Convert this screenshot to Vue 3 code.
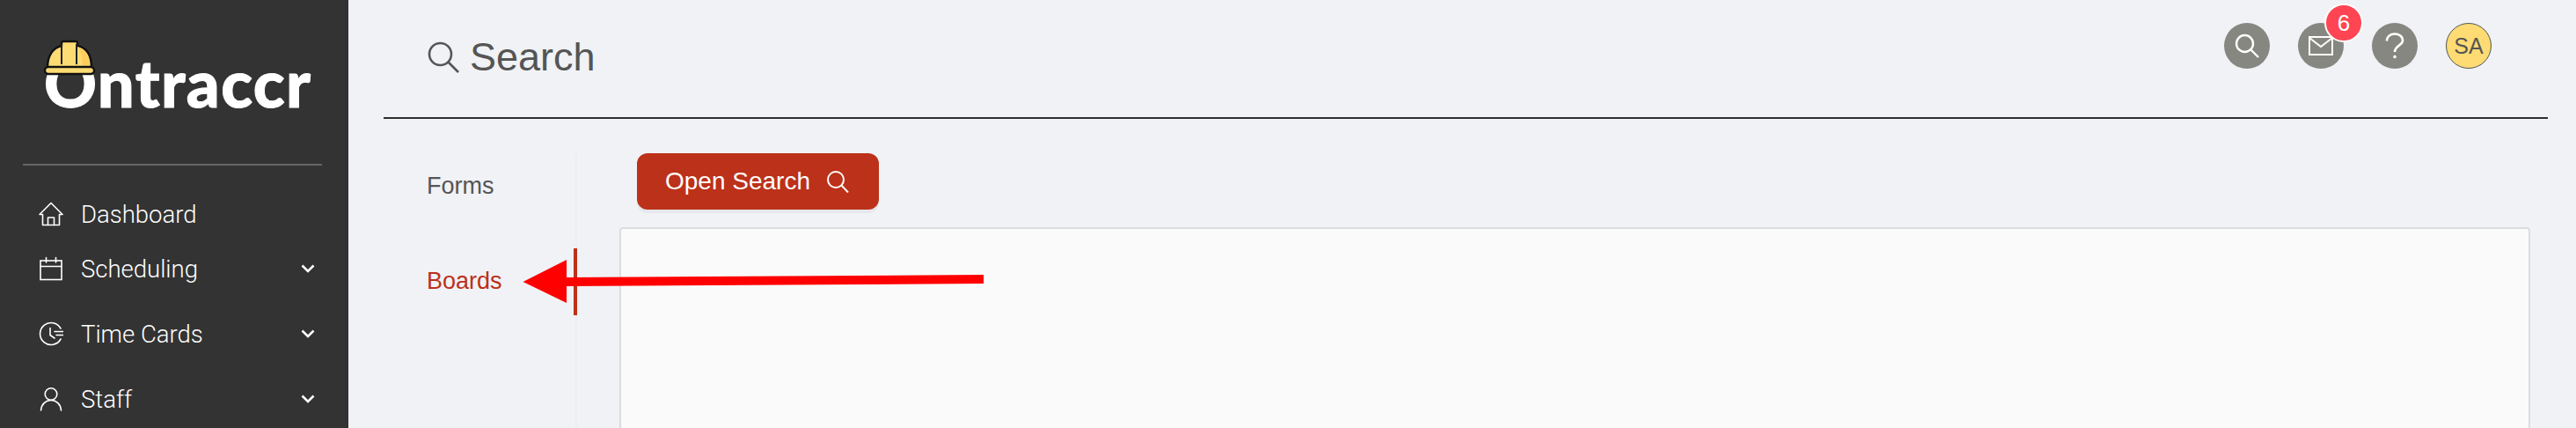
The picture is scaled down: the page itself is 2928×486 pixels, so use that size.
<template>
  <div class="page">
    <aside class="sidebar">
      <div class="logo">
        <span class="logo-text">Ontraccr</span>
        <svg class="helmet" width="60" height="42" viewBox="0 0 60 42">
          <path d="M5 32C5 17 12 9 21 7V4Q21 2 23 2H37Q39 2 39 4V7C49 9 55 17 55 32Z" fill="#ffdc73" stroke="#111" stroke-width="2.4" stroke-linejoin="round"/>
          <path d="M39 8C47 10 53 18 53 31H44C45 22 43 13 39 8Z" fill="#ffcf5e"/>
          <path d="M21 5V28M38 5V28" stroke="#222" stroke-width="2" fill="none"/>
          <rect x="2" y="31" width="56" height="8" rx="4" fill="#ffdc73" stroke="#111" stroke-width="2.4"/>
        </svg>
      </div>
      <div class="side-divider"></div>
      <nav class="menu">
        <div v-for="item in menu" :key="item.label" class="menu-item" :class="{ first: !item.sub }">
          <svg class="menu-icon" width="28" height="28" viewBox="0 0 28 28" fill="none" stroke="#fff" stroke-width="1.6" stroke-linejoin="round" stroke-linecap="round">
            <template v-if="item.icon === 'home'">
              <path d="M1 14.5L14 1.5L27 14.5H23.5V26.5H4.5V14.5Z"/>
              <path d="M10.5 26.5V18H17.5V26.5"/>
            </template>
            <template v-else-if="item.icon === 'calendar'">
              <rect x="2" y="5" width="24" height="21.5" stroke-linejoin="miter"/>
              <path d="M2 11.5H26M8.5 1.5V7M19.5 1.5V7"/>
            </template>
            <template v-else-if="item.icon === 'clock'">
              <path d="M25 8A12.5 12.5 0 1 0 25 20"/>
              <path d="M13 7.5V15.5L18 19M18 11.5H27.5M20 15.5H27.5"/>
            </template>
            <template v-else>
              <circle cx="14" cy="8.5" r="6.8"/>
              <path d="M2.5 27C3 20 8 15.5 14 15.5S25 20 25.5 27"/>
            </template>
          </svg>
          <span class="menu-label">{{ item.label }}</span>
          <svg v-if="item.sub" class="chevron" width="16" height="10" viewBox="0 0 16 10" fill="none" stroke="#fff" stroke-width="2.6">
            <path d="M1.5 1.5L8 8L14.5 1.5"/>
          </svg>
        </div>
      </nav>
    </aside>

    <main class="main">
      <header class="header">
        <div class="title">
          <svg width="36" height="36" viewBox="0 0 36 36" fill="none" stroke="#555" stroke-width="2.6">
            <circle cx="14.5" cy="14.5" r="12.5"/>
            <path d="M23.5 23.5L35 35"/>
          </svg>
          <span>Search</span>
        </div>
        <div class="actions">
          <button class="round">
            <svg width="30" height="30" viewBox="0 0 30 30" fill="none" stroke="#fff" stroke-width="2.4">
              <circle cx="12.5" cy="12.5" r="9.5"/>
              <path d="M19.5 19.5L28 28"/>
            </svg>
          </button>
          <button class="round">
            <svg width="28" height="22" viewBox="0 0 28 22" fill="none" stroke="#fff" stroke-width="2">
              <rect x="1" y="1" width="26" height="20"/>
              <path d="M1 2L14 12L27 2"/>
            </svg>
            <span class="badge">6</span>
          </button>
          <button class="round">
            <svg width="22" height="30" viewBox="0 0 22 30" fill="none" stroke="#fff" stroke-width="2.6">
              <path d="M2 9.5C2 4.5 6 1.5 11 1.5S20 4.5 20 9C20 15 11 14.5 11 22"/>
              <circle cx="11" cy="27.5" r="1.4" fill="#fff" stroke-width="1"/>
            </svg>
          </button>
          <div class="avatar">SA</div>
        </div>
      </header>

      <div class="body">
        <div class="tabs">
          <div class="tab">Forms</div>
          <div class="tab active">Boards</div>
        </div>
        <div class="content">
          <button class="open-btn">
            <span>Open Search</span>
            <svg width="26" height="26" viewBox="0 0 26 26" fill="none" stroke="#fff" stroke-width="2">
              <circle cx="11" cy="11" r="9"/>
              <path d="M17.5 17.5L25 25.5"/>
            </svg>
          </button>
          <div class="panel"></div>
        </div>
      </div>
    </main>

    <!-- red annotation drawn on top of the screenshot -->
    <svg class="arrow" width="540" height="60" viewBox="0 0 540 60">
      <path d="M50 5V54L0.5 30Z" fill="#ff0000"/>
      <path d="M50 25L524 22V32L50 35Z" fill="#ff0000"/>
    </svg>
  </div>
</template>

<script setup>
const menu = [
  { label: 'Dashboard', icon: 'home', sub: false },
  { label: 'Scheduling', icon: 'calendar', sub: true },
  { label: 'Time Cards', icon: 'clock', sub: true },
  { label: 'Staff', icon: 'user', sub: true }
]
</script>

<style>
html,
body {
  margin: 0;
  background: #f0f2f6;
}
</style>

<style scoped>
.page {
  position: relative;
  display: flex;
  width: 2928px;
  height: 486px;
  overflow: hidden;
  background: #f0f2f6;
  font-family: "Liberation Sans", Arial, sans-serif;
}

.sidebar {
  flex: 0 0 396px;
  background: #333;
  color: #fff;
  font-family: Roboto, sans-serif;
}

.logo {
  position: relative;
  height: 186px;
  box-sizing: border-box;
  padding: 54px 0 0 50px;
}

.logo-text {
  display: block;
  font-family: Lato, sans-serif;
  font-weight: 900;
  font-size: 74px;
  line-height: 80px;
  letter-spacing: 1.4px;
  color: #fff;
  -webkit-text-stroke: 1px #fff;
}

.helmet {
  position: absolute;
  left: 49px;
  top: 45px;
}

.side-divider {
  height: 2px;
  margin: 0 30px 0 26px;
  background: #666;
}

.menu {
  padding-top: 30px;
}

.menu-item {
  display: flex;
  align-items: center;
  height: 74px;
  padding: 0 38px 0 44px;
}

.menu-item.first {
  height: 50px;
}

.menu-label {
  flex: 1;
  margin-left: 20px;
  font-size: 27.5px;
  font-weight: 300;
}

.menu-icon {
  flex: none;
}

.main {
  flex: 1;
  min-width: 0;
  padding: 0 32px 0 40px;
}

.header {
  display: flex;
  justify-content: space-between;
  height: 133px;
  border-bottom: 2px solid #2e2e2e;
}

.title {
  display: flex;
  align-items: center;
  align-self: flex-start;
  gap: 12px;
  height: 130px;
  padding-left: 50px;
  font-size: 45px;
  color: #555;
}

.actions {
  display: flex;
  gap: 32px;
  padding: 26px 64px 0 0;
}

.round {
  position: relative;
  display: flex;
  align-items: center;
  justify-content: center;
  width: 52px;
  height: 52px;
  padding: 0;
  border: 0;
  border-radius: 50%;
  background: #878781;
}

.badge {
  position: absolute;
  top: -22px;
  right: -22px;
  box-sizing: border-box;
  width: 44px;
  height: 44px;
  border: 2px solid #fff;
  border-radius: 50%;
  background: #ff4554;
  color: #fff;
  font-size: 26px;
  line-height: 40px;
  text-align: center;
}

.avatar {
  box-sizing: border-box;
  width: 52px;
  height: 52px;
  border: 1px solid #555;
  border-radius: 50%;
  background: #ffdc73;
  color: #555;
  font-size: 25px;
  line-height: 50px;
  text-align: center;
}

.body {
  display: flex;
}

.tabs {
  flex: 0 0 220px;
  box-sizing: border-box;
  margin-top: 39px;
  height: 320px;
  border-right: 2px solid #eceef2;
}

.tab {
  box-sizing: border-box;
  height: 76px;
  margin-right: -2px;
  margin-bottom: 32px;
  padding-left: 49px;
  font-size: 27px;
  line-height: 74px;
  color: #555;
}

.tab.active {
  color: #bc3119;
  border-right: 4px solid #bc3119;
}

.content {
  flex: 1;
  min-width: 0;
  padding: 39px 20px 0 48px;
}

.open-btn {
  display: flex;
  align-items: center;
  gap: 18px;
  box-sizing: border-box;
  width: 275px;
  height: 64px;
  margin-left: 20px;
  padding: 0 0 1px 32px;
  border: 0;
  border-radius: 12px;
  background: #bc3119;
  box-shadow: 0 4px 0 rgba(0, 0, 0, 0.045);
  color: #fff;
  font-family: inherit;
  font-size: 28px;
}

.panel {
  height: 400px;
  margin-top: 20px;
  border: 2px solid #ddd;
  border-radius: 4px;
  background: #fafafa;
}

.arrow {
  position: absolute;
  left: 594px;
  top: 290px;
}
</style>
